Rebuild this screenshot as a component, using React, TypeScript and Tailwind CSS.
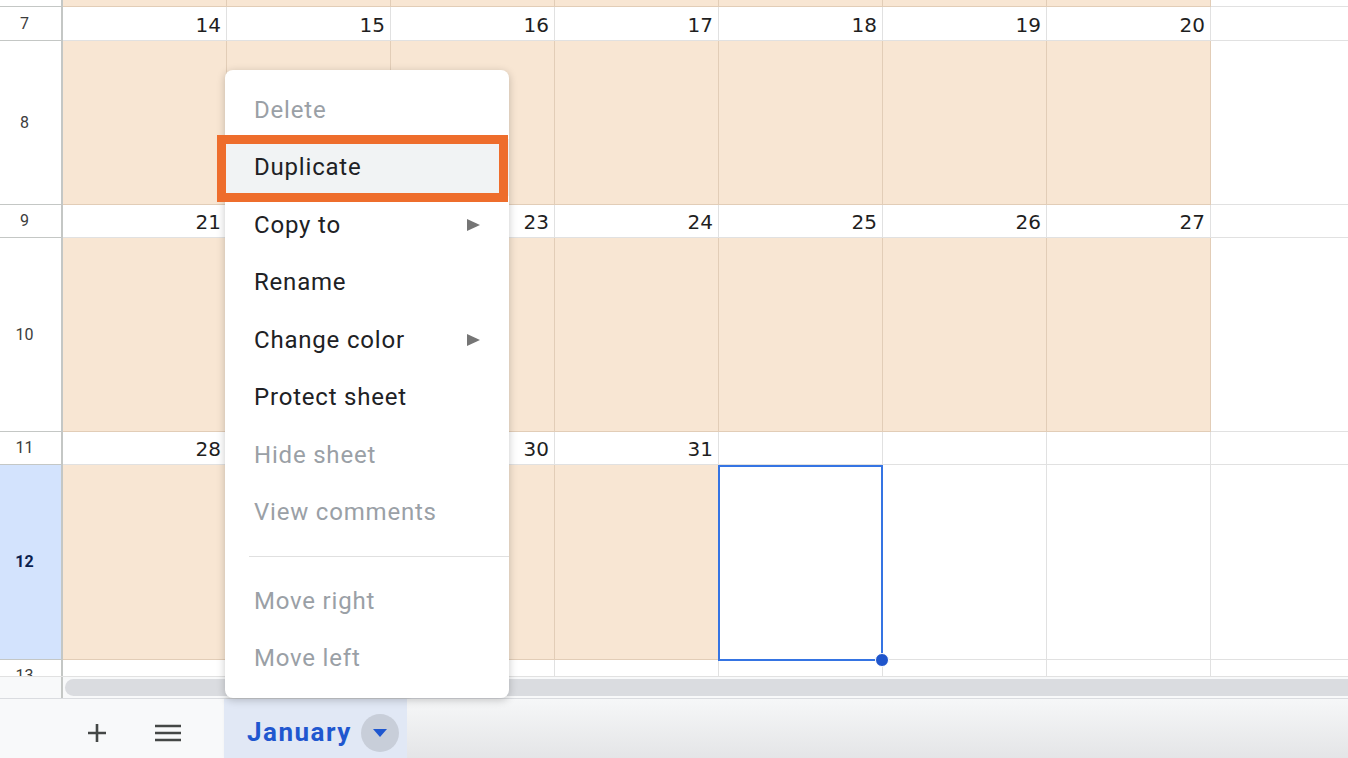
import React from 'react';

// ── Sheet data ────────────────────────────────────────────────────────────────

type Row = {
  label: string;
  h: number;
  kind: 'num' | 'box';
  nums?: string[];
  peach?: number;
  selected?: boolean;
};

// 22 and 29 sit under the menu, so they're left blank
const ROWS: Row[] = [
  { label: '', h: 7, kind: 'box', peach: 7 },
  { label: '7', h: 34, kind: 'num', nums: ['14', '15', '16', '17', '18', '19', '20'] },
  { label: '8', h: 164, kind: 'box', peach: 7 },
  { label: '9', h: 33, kind: 'num', nums: ['21', '', '23', '24', '25', '26', '27'] },
  { label: '10', h: 194, kind: 'box', peach: 7 },
  { label: '11', h: 33, kind: 'num', nums: ['28', '', '30', '31', '', '', ''] },
  { label: '12', h: 195, kind: 'box', peach: 4, selected: true },
  { label: '13', h: 33, kind: 'num', nums: ['', '', '', '', '', '', ''] },
];

const MENU: { label: string; disabled?: boolean; sub?: boolean; active?: boolean; sep?: boolean }[] = [
  { label: 'Delete', disabled: true },
  { label: 'Duplicate', active: true },
  { label: 'Copy to', sub: true },
  { label: 'Rename' },
  { label: 'Change color', sub: true },
  { label: 'Protect sheet' },
  { label: 'Hide sheet', disabled: true },
  { label: 'View comments', disabled: true },
  { label: '', sep: true },
  { label: 'Move right', disabled: true },
  { label: 'Move left', disabled: true },
];

function SheetRow({ row }: { row: Row }) {
  const cols = Array.from({ length: 7 }, (_, i) => i);
  const peachCount = row.kind === 'box' ? row.peach ?? 0 : 0;
  return (
    <div className="flex shrink-0" style={{ height: row.h }}>
      <div
        className={`w-[63px] shrink-0 flex items-center justify-center pr-[12px] border-r-2 border-b border-r-[#c4c7c5] border-b-[#c4c7c5] text-[16px] ${
          row.selected ? 'bg-[#d3e3fd] text-[#0b1f4f] font-bold' : 'bg-white text-[#3c3c3c]'
        }`}
        style={{ fontFamily: 'Roboto, "Liberation Sans", sans-serif' }}
      >
        {row.label}
      </div>
      {cols.map(i => {
        const peach = i < peachCount;
        return (
          <div
            key={i}
            className={`w-[164px] shrink-0 border-r border-b flex items-center justify-end pr-[5px] pt-[2px] text-[20px] text-[#1f1f1f] ${
              peach ? 'bg-[#f8e6d3] border-[#e2cdb7]' : 'bg-white border-[#e1e1e1]'
            }`}
            style={{ fontFamily: '"DejaVu Sans", Verdana, sans-serif' }}
          >
            {row.kind === 'num' ? row.nums?.[i] : null}
          </div>
        );
      })}
      <div className="flex-1 bg-white border-b border-[#e1e1e1]" />
    </div>
  );
}

function Arrow() {
  return (
    <svg width="13" height="12" viewBox="0 0 13 12">
      <polygon points="0,0 13,6 0,12" fill="#757575" />
    </svg>
  );
}

export default function App() {
  return (
    <div
      className="relative w-[1348px] h-[758px] overflow-hidden bg-white"
      style={{ fontFamily: 'Roboto, "Liberation Sans", sans-serif' }}
    >
      {/* grid */}
      <div className="h-[676px] overflow-hidden flex flex-col">
        {ROWS.map((r, i) => (
          <SheetRow key={i} row={r} />
        ))}
      </div>

      {/* horizontal scroll */}
      <div className="h-[22px] flex border-t border-[#e1e1e1]">
        <div className="w-[63px] shrink-0 bg-[#f8f9fa] border-r-2 border-[#c4c7c5]" />
        <div className="flex-1 bg-[#f8f9fa] pl-[2px] pt-[2px]">
          <div className="h-[17px] w-[1400px] rounded-full bg-[#dadce0]" />
        </div>
      </div>

      {/* sheet tabs */}
      <div className="h-[60px] flex border-t border-[#dadce0] bg-[#f8f9fa]">
        <div className="w-[224px] shrink-0 flex items-center pt-[8px]">
          <div className="w-[38px] h-[38px] ml-[78px] flex items-center justify-center">
            <svg width="20" height="20" viewBox="0 0 20 20">
              <path d="M10 1v18M1 10h18" stroke="#444746" strokeWidth="2.6" />
            </svg>
          </div>
          <div className="w-[38px] h-[38px] ml-[33px] flex items-center justify-center">
            <svg width="26" height="20" viewBox="0 0 26 20">
              <path d="M0 3h26M0 10h26M0 17h26" stroke="#444746" strokeWidth="2.6" />
            </svg>
          </div>
        </div>
        <div className="w-[183px] shrink-0 bg-[#e1e8f5] flex items-center pt-[8px] pl-[23px] gap-[9px] shadow-[2px_0_4px_rgba(0,0,0,0.12)]">
          <span className="text-[26px] font-bold tracking-[1.5px] text-[#1f57cf]">January</span>
          <span className="w-[38px] h-[38px] rounded-full bg-[#c8ced9] flex items-center justify-center">
            <svg width="14" height="8" viewBox="0 0 14 8">
              <polygon points="0,0 14,0 7,8" fill="#1f57cf" />
            </svg>
          </span>
        </div>
        <div className="flex-1 bg-gradient-to-b from-[#f6f7f8] to-[#e4e5e7]" />
      </div>

      {/* selection */}
      <div className="absolute left-[718px] top-[465px] w-[165px] h-[196px] border-2 border-[#3574e3]" />
      <div className="absolute left-[875px] top-[653px] w-[14px] h-[14px] rounded-full bg-[#1f55cc] border border-white" />

      {/* context menu */}
      <div className="absolute left-[225px] top-[70px] w-[284px] h-[628px] bg-white rounded-lg shadow-[0_2px_8px_rgba(0,0,0,0.22)] pt-[11px]">
        {MENU.map((m, i) =>
          m.sep ? (
            <div key={i} className="my-[15px] ml-[24px] h-px bg-[#e0e0e0]" />
          ) : (
            <div
              key={i}
              className={`h-[57.5px] flex items-center justify-between pl-[29px] pr-[29px] text-[24px] tracking-[0.8px] ${
                m.active ? 'bg-[#f1f3f4]' : ''
              } ${m.disabled ? 'text-[#9aa0a6]' : 'text-[#202124]'}`}
            >
              <span>{m.label}</span>
              {m.sub && <Arrow />}
            </div>
          ),
        )}
      </div>

      {/* highlight */}
      <div className="absolute left-[217px] top-[135px] w-[291px] h-[67px] border-[9px] border-[#ee6d2c]" />
    </div>
  );
}
